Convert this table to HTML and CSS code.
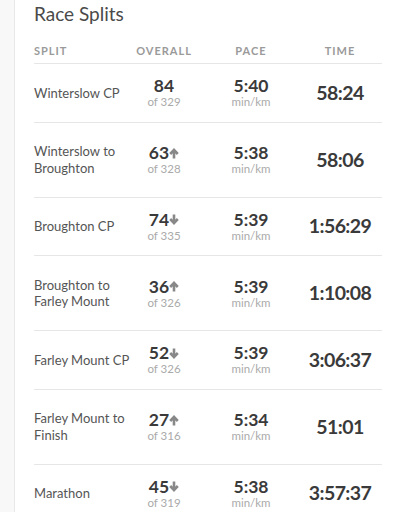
FILE: index.html
```html
<!DOCTYPE html>
<html>
<head>
<meta charset="utf-8">
<link rel="stylesheet" href="styles.css">
</head>
<body>
<div class="card">
  <h2 class="title">Race Splits</h2>
  <div class="table">
    <div class="row head">
      <div class="c-split">SPLIT</div>
      <div class="c-mid">OVERALL</div>
      <div class="c-mid">PACE</div>
      <div class="c-mid">TIME</div>
    </div>

    <div class="row">
      <div class="c-split label">Winterslow CP</div>
      <div class="c-mid"><div class="big">84</div><div class="sub">of 329</div></div>
      <div class="c-mid"><div class="big">5:40</div><div class="sub">min/km</div></div>
      <div class="c-mid time">58:24</div>
    </div>

    <div class="row">
      <div class="c-split label">Winterslow to<br>Broughton</div>
      <div class="c-mid"><div class="big">63<svg class="arr" viewBox="0 0 10 11"><path d="M5 10.5V2.5M1.2 6L5 2l3.8 4" /></svg></div><div class="sub">of 328</div></div>
      <div class="c-mid"><div class="big">5:38</div><div class="sub">min/km</div></div>
      <div class="c-mid time">58:06</div>
    </div>

    <div class="row">
      <div class="c-split label">Broughton CP</div>
      <div class="c-mid"><div class="big">74<svg class="arr" viewBox="0 0 10 11"><path d="M5 0.5V8.5M1.2 5L5 9l3.8-4" /></svg></div><div class="sub">of 335</div></div>
      <div class="c-mid"><div class="big">5:39</div><div class="sub">min/km</div></div>
      <div class="c-mid time">1:56:29</div>
    </div>

    <div class="row">
      <div class="c-split label">Broughton to<br>Farley Mount</div>
      <div class="c-mid"><div class="big">36<svg class="arr" viewBox="0 0 10 11"><path d="M5 10.5V2.5M1.2 6L5 2l3.8 4" /></svg></div><div class="sub">of 326</div></div>
      <div class="c-mid"><div class="big">5:39</div><div class="sub">min/km</div></div>
      <div class="c-mid time">1:10:08</div>
    </div>

    <div class="row">
      <div class="c-split label">Farley Mount CP</div>
      <div class="c-mid"><div class="big">52<svg class="arr" viewBox="0 0 10 11"><path d="M5 0.5V8.5M1.2 5L5 9l3.8-4" /></svg></div><div class="sub">of 326</div></div>
      <div class="c-mid"><div class="big">5:39</div><div class="sub">min/km</div></div>
      <div class="c-mid time">3:06:37</div>
    </div>

    <div class="row">
      <div class="c-split label">Farley Mount to<br>Finish</div>
      <div class="c-mid"><div class="big">27<svg class="arr" viewBox="0 0 10 11"><path d="M5 10.5V2.5M1.2 6L5 2l3.8 4" /></svg></div><div class="sub">of 316</div></div>
      <div class="c-mid"><div class="big">5:34</div><div class="sub">min/km</div></div>
      <div class="c-mid time">51:01</div>
    </div>

    <div class="row">
      <div class="c-split label">Marathon</div>
      <div class="c-mid"><div class="big">45<svg class="arr" viewBox="0 0 10 11"><path d="M5 0.5V8.5M1.2 5L5 9l3.8-4" /></svg></div><div class="sub">of 319</div></div>
      <div class="c-mid"><div class="big">5:38</div><div class="sub">min/km</div></div>
      <div class="c-mid time">3:57:37</div>
    </div>
  </div>
</div>
</body>
</html>
```

FILE: styles.css
```css
html, body {
  margin: 0;
  padding: 0;
  background: #f8f8f8;
  height: 100%;
  overflow: hidden;
}
.card {
  margin-left: 14px;
  border-left: 1px solid #e8e8e8;
  background: #fff;
  min-height: 100%;
  padding: 2px 18px 0 19px;
  box-sizing: border-box;
  font-family: "Lato", "Open Sans", sans-serif;
}
.title {
  margin: 0;
  font-size: 19px;
  line-height: 24px;
  font-weight: 400;
  color: #4a4a4a;
}
.row {
  display: grid;
  grid-template-columns: 90px 80px 94px 84px;
  align-items: center;
  border-top: 1px solid #e6e6e6;
}
.row.head {
  border-top: none;
  padding: 18px 0 5px;
  font-size: 11px;
  line-height: 14px;
  font-weight: 700;
  letter-spacing: 1px;
  color: #9a9a9a;
}
.c-split {
  text-align: left;
}
.c-mid {
  text-align: center;
}
.label {
  padding: 20.5px 0;
  font-size: 13px;
  line-height: 16.5px;
  color: #555;
  white-space: nowrap;
}
.big {
  font-family: "Lato", sans-serif;
  font-weight: 700;
  font-size: 17.5px;
  line-height: 18px;
  color: #3a3a3a;
  display: flex;
  justify-content: center;
  align-items: center;
}
.sub {
  font-family: "Lato", sans-serif;
  font-size: 11.5px;
  line-height: 13px;
  color: #aaa;
}
.time {
  font-family: "Lato", sans-serif;
  font-weight: 700;
  font-size: 19.5px;
  line-height: 22px;
  color: #3a3a3a;
  letter-spacing: -0.6px;
}
.arr {
  width: 10px;
  height: 11px;
  margin-left: 0;
  fill: none;
  stroke: #888;
  stroke-width: 2.6;
}
```
